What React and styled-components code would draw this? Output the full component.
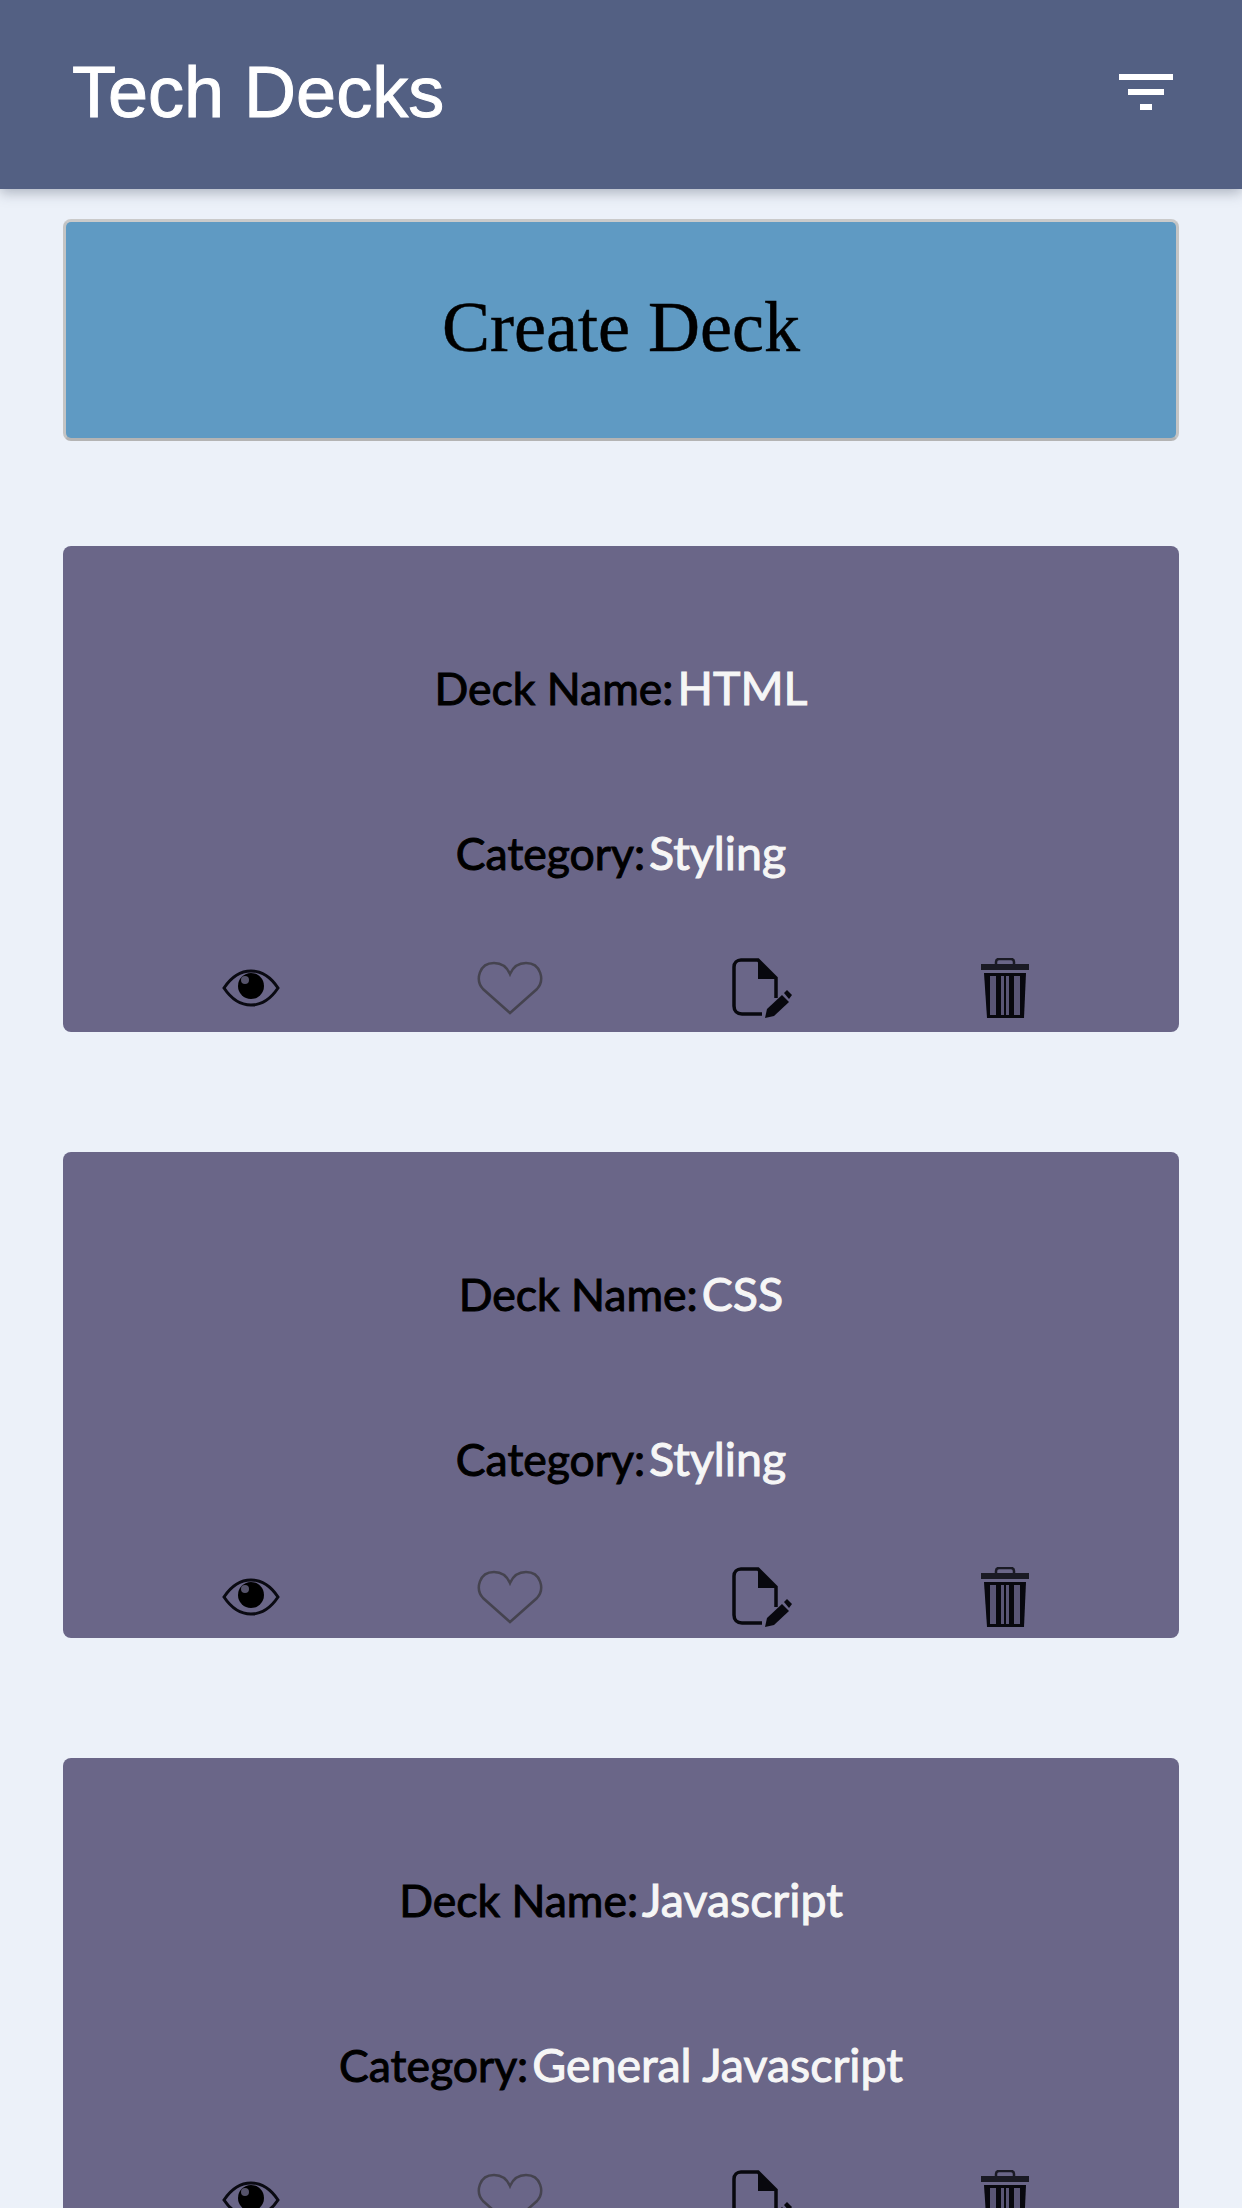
import React from 'react'
import styled, { createGlobalStyle } from 'styled-components'

const Global = createGlobalStyle`
    html, body {
        margin: 0;
        padding: 0;
        height: 2208px;
        overflow: hidden;
        background-color: #ECF1F9;
    }
    * {
        box-sizing: border-box;
    }
`;

const Header = styled.header`
    height: 189px;
    padding: 0 69px 6px 72px;
    display: flex;
    align-items: center;
    justify-content: space-between;
    background-color: #536083;
    box-shadow: 0 4px 12px rgba(60, 70, 90, 0.35);
`;

const Title = styled.h1`
    margin: 0;
    color: #FFFFFF;
    font-family: 'Liberation Sans', Arial, sans-serif;
    font-weight: 400;
    font-size: 72px;
    line-height: 80px;
    -webkit-text-stroke: 1px #FFFFFF;
`;

const Main = styled.main`
    padding: 30px 63px 0;
    display: flex;
    flex-direction: column;
`;

const CreateButton = styled.button`
    width: 100%;
    height: 222px;
    margin-bottom: 105px;
    padding: 0 0 6px;
    border-width: 3px;
    border-style: solid;
    border-color: #CACACA #C4C4C4 #B4B4B4;
    border-radius: 8px;
    background-color: #5F9AC3;
    color: #000000;
    font-family: 'Liberation Serif', 'Times New Roman', serif;
    font-size: 72px;
    -webkit-text-stroke: 0.5px #000000;
`;

const Card = styled.section`
    height: 486px;
    margin-bottom: 120px;
    padding-top: 113px;
    display: flex;
    flex-direction: column;
    align-items: center;
    border-radius: 8px;
    background-color: #6A6688;
`;

const Line = styled.p`
    height: 56px;
    margin: 0 0 109px;
    color: #000000;
    font-family: Lato, 'Open Sans', sans-serif;
    font-size: 44.5px;
    line-height: 56px;
    white-space: nowrap;
    -webkit-text-stroke: 1px #000000;
`;

const Value = styled.span`
    margin-left: 4px;
    color: #F6F6F6;
    font-size: 46.5px;
    -webkit-text-stroke: 1px #F6F6F6;
`;

const Actions = styled.div`
    width: 100%;
    height: 60px;
    flex-shrink: 0;
    margin-top: ${(props) => props.$drop - 31}px;
    padding-left: 159px;
    display: flex;
    align-items: center;
    gap: 189px;
`;

const IconSlot = styled.span`
    width: ${(props) => props.$width}px;
    height: 60px;
    display: flex;
    align-items: center;
    justify-content: flex-start;
    flex-shrink: 0;
    filter: blur(0.6px);
`;

function FilterIcon() {
    return (
        <svg width="54" height="36" viewBox="0 0 54 36" fill="#FFFFFF">
            <rect x="0" y="0" width="54" height="6" />
            <rect x="9" y="15" width="36" height="6" />
            <rect x="21" y="30" width="12" height="6" />
        </svg>
    );
}

function EyeIcon() {
    return (
        <svg width="58" height="38" viewBox="0 0 58 38">
            <path d="M2 19C10 7 19 2 29 2s19 5 27 17c-8 12-17 17-27 17S10 31 2 19z" fill="none" stroke="#0A0A12" strokeWidth="3" />
            <circle cx="29" cy="17" r="13" fill="#000000" />
            <circle cx="23" cy="11" r="4" fill="#55536A" />
        </svg>
    );
}

function HeartIcon() {
    return (
        <svg width="66" height="54" viewBox="0 0 66 54">
            <path d="M33 52L6 28C-2 19 2 2 17 2c8 0 13 4 16 11C36 6 41 2 49 2c15 0 19 17 11 26z" fill="none" stroke="#45434F" strokeWidth="2.5" />
        </svg>
    );
}

function EditDocIcon() {
    return (
        <svg width="60" height="60" viewBox="0 0 60 60">
            <path d="M30 56H10c-5 0-8-3-8-8V9c0-4 3-7 7-7h17l18 18v20" fill="none" stroke="#08080E" strokeWidth="3.5" />
            <path d="M26 2l18 18v1H26z" fill="#08080E" />
            <path d="M33 60l2-9 15-14 7 7-15 14z" fill="#08080E" />
            <path d="M52 35l3-3 5 5-3 4z" fill="#08080E" />
        </svg>
    );
}

function TrashIcon() {
    return (
        <svg width="48" height="60" viewBox="0 0 48 60">
            <path d="M15 7V4c0-2 1-3 3-3h12c2 0 3 1 3 3v3" fill="none" stroke="#1A1A24" strokeWidth="2.5" />
            <rect x="0" y="6" width="48" height="6" fill="#1A1A24" />
            <path d="M3 15h42l-2 45H6z" fill="#08080E" />
            <path d="M9 18h6v39H9zM20 18h3v39h-3zM25 18h3v39h-3zM33 18h6v39h-6z" fill="#5A5676" />
        </svg>
    );
}

const decks = [
    { name: 'HTML', category: 'Styling', iconDrop: 0 },
    { name: 'CSS', category: 'Styling', iconDrop: 3 },
    { name: 'Javascript', category: 'General Javascript', iconDrop: 0 },
];

function DeckCard({ deck }) {
    return (
        <Card>
            <Line>Deck Name:<Value>{deck.name}</Value></Line>
            <Line>Category:<Value>{deck.category}</Value></Line>
            <Actions $drop={deck.iconDrop}>
                <IconSlot $width={66}><EyeIcon /></IconSlot>
                <IconSlot $width={66}><HeartIcon /></IconSlot>
                <IconSlot $width={60}><EditDocIcon /></IconSlot>
                <IconSlot $width={48}><TrashIcon /></IconSlot>
            </Actions>
        </Card>
    );
}

export default function App() {
    return (
        <>
            <Global />
            <Header>
                <Title>Tech Decks</Title>
                <FilterIcon />
            </Header>
            <Main>
                <CreateButton>Create Deck</CreateButton>
                {decks.map((deck) => (
                    <DeckCard key={deck.name} deck={deck} />
                ))}
            </Main>
        </>
    );
}
